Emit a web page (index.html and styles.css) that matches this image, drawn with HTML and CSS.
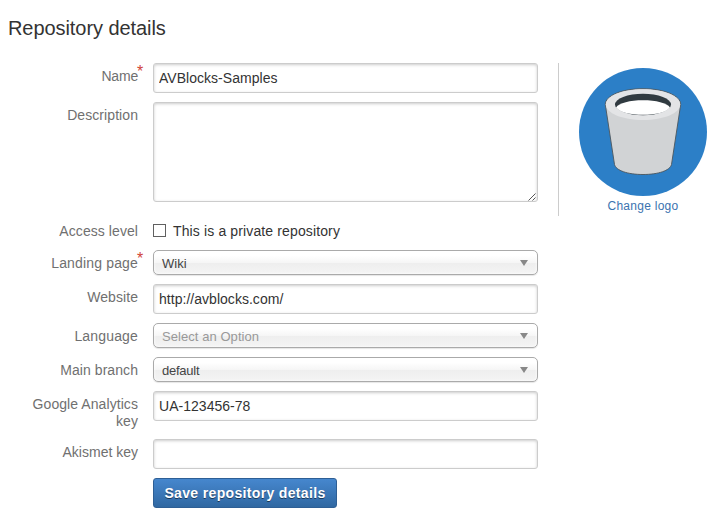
FILE: index.html
```html
<!DOCTYPE html>
<html lang="en">
<head>
<meta charset="utf-8">
<title>Repository details</title>
<link rel="stylesheet" href="styles.css">
</head>
<body>
<h1>Repository details</h1>
<div class="content">
  <form class="form">
    <div class="row"><label class="label name" for="name">Name<span class="req">*</span></label><input class="text" id="name" value="AVBlocks-Samples"></div>
    <div class="row"><label class="label" for="desc">Description</label><div class="area"><textarea id="desc"></textarea><svg class="grip" width="8" height="8" viewBox="0 0 8 8"><path d="M.5 7.500 7.500.5M4.500 7.500 7.500 4.500" stroke="#444" stroke-width=".9" fill="none"/></svg></div></div>
    <div class="row access"><span class="label">Access level</span><label class="check"><input type="checkbox">This is a private repository</label></div>
    <div class="row"><span class="label wide">Landing page<span class="req">*</span></span><div class="select"><span>Wiki</span><i class="arrow"></i></div></div>
    <div class="row"><label class="label" for="site">Website</label><input class="text" id="site" value="http://avblocks.com/"></div>
    <div class="row"><span class="label wide">Language</span><div class="select empty"><span>Select an Option</span><i class="arrow"></i></div></div>
    <div class="row"><span class="label">Main branch</span><div class="select tight"><span>default</span><i class="arrow"></i></div></div>
    <div class="row"><label class="label" for="ga">Google Analytics key</label><input class="text" id="ga" value="UA-123456-78"></div>
    <div class="row"><label class="label plain" for="ak">Akismet key</label><input class="text" id="ak"></div>
    <button class="save" type="button">Save repository details</button>
  </form>
  <aside class="logo">
    <svg width="128" height="128" viewBox="0 0 128 128">
      <circle cx="64" cy="64" r="64" fill="#2c7fc7"/>
      <path d="M26.3 36.500C26.300 27.500 43 20.700 64 20.700s37.700 6.800 37.700 15.800L92.500 96.500c-1.500 6-13 10-28.500 10s-27-4-28.500-10z" fill="#d1d3d5" stroke="#4c565c" stroke-width=".9"/>
      <path d="M26.800 36.500C26.800 28 43 21.200 64 21.200s37.200 6.800 37.200 15.300S85 52 64 52 26.800 45 26.800 36.500z" fill="#e3e4e6"/>
      <ellipse cx="64" cy="36.500" rx="28" ry="10.700" fill="#303a40"/>
      <path d="M37 39.500C40 35 51 32.300 64 32.300S88 35 91 39.500C87 44.300 77 46.800 64 46.800S41 44.300 37 39.500z" fill="#fff"/>
    </svg>
    <a>Change logo</a>
  </aside>
</div>
</body>
</html>
```
FILE: styles.css
```css
* { box-sizing: border-box; }
body {
  margin: 0;
  padding: 16px 7px 0 8px;
  background: #fff;
  color: #333;
  font: 14px/17px "Liberation Sans", Arial, sans-serif;
}
h1 { margin: 0 0 23px; font-size: 20px; line-height: 24px; font-weight: normal; letter-spacing: -.07px; }
.content { display: flex; align-items: flex-start; }
.form { width: 530px; }
.row { display: flex; align-items: flex-start; margin-bottom: 9px; }
.label {
  position: relative;
  width: 130px;
  flex: none;
  margin-right: 15px;
  padding: 5px 0 0 20px;
  text-align: right;
  color: #707070;
  letter-spacing: .07px;
}
.label.wide { letter-spacing: .16px; }
.label.plain { letter-spacing: 0; }
.label.name { letter-spacing: -.2px; }
.req { position: absolute; left: 100%; top: 0; margin-left: -1px; color: #d04437; font-size: 16px; }
.text, textarea {
  display: block;
  width: 385px;
  height: 30px;
  margin: 0;
  padding: 0 5px;
  border: 1px solid #ccc;
  border-radius: 3px;
  background: #fff;
  box-shadow: inset 0 1px 3px #ccc;
  color: #333;
  font: inherit;
  letter-spacing: .03px;
}
.area { position: relative; height: 100px; }
textarea { height: 100px; resize: none; }
.grip { position: absolute; right: 2px; bottom: 1px; }
.access { margin-top: 16px; margin-bottom: 10px; }
.check { display: flex; align-items: center; padding-top: 5px; letter-spacing: .13px; }
.check input {
  appearance: none;
  width: 13px;
  height: 13px;
  margin: -2px 7px 0 0;
  border: 1px solid #606060;
  background: #fff;
}
.select {
  display: flex;
  align-items: center;
  justify-content: space-between;
  width: 385px;
  height: 25px;
  padding: 1px 9px 0 8px;
  border: 1px solid #aaa;
  border-radius: 5px;
  background: linear-gradient(#fff 20%, #f6f6f6 50%, #eee 52%, #f4f4f4 100%);
  box-shadow: inset 0 0 3px #fff, 0 1px 1px rgba(0, 0, 0, .1);
  color: #444;
  font-size: 13px;
  letter-spacing: .06px;
}
.select.tight { letter-spacing: -.25px; }
.select.empty { color: #999; }
.arrow {
  margin-top: -1px;
  border: 4px solid transparent;
  border-top: 6px solid #888;
  border-bottom: 0;
}
.save {
  display: block;
  width: 184px;
  height: 30px;
  margin-left: 145px;
  padding: 0;
  border: 1px solid #2e5f95;
  border-radius: 3px;
  background: linear-gradient(#4687ce, #3068a2);
  color: #fff;
  font: bold 14px/20px "Liberation Sans", Arial, sans-serif;
  letter-spacing: .34px;
  text-shadow: 0 1px 0 rgba(0, 0, 0, .5);
}
.logo {
  width: 149px;
  height: 153px;
  margin-left: 20px;
  padding: 5px 0 0 20px;
  border-left: 1px solid #ccc;
}
.logo svg { display: block; }
.logo a {
  display: block;
  padding-top: 2px;
  color: #3b73af;
  font-size: 12px;
  text-align: center;
  letter-spacing: .27px;
}
```
